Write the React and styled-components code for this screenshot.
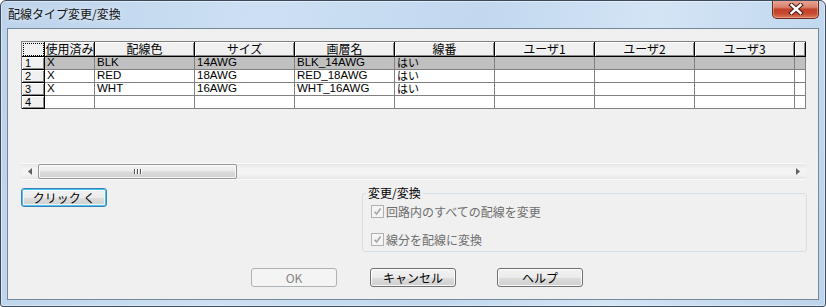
import React from "react";
import styled, { createGlobalStyle } from "styled-components";

const GlobalStyle = createGlobalStyle`
  html, body {
    margin: 0;
    padding: 0;
    background: #ffffff;
  }
  body {
    font-family: "Noto Sans CJK JP", "Liberation Sans", sans-serif;
    font-size: 12px;
    color: #000;
  }
`;

const Window = styled.div`
  width: 826px;
  height: 307px;
  box-sizing: border-box;
  border: 1px solid #3b4a5b;
  border-radius: 6px 6px 3px 3px;
  background: linear-gradient(
    100deg,
    #bcd3eb 0%,
    #cde0f3 30%,
    #c2d8ef 55%,
    #d3e4f5 75%,
    #bdd4ec 100%
  );
  box-shadow: inset 0 0 0 1px rgba(255, 255, 255, 0.45);
  display: flex;
  flex-direction: column;
  padding: 0 6px 6px 6px;
  overflow: hidden;
`;

const TitleBar = styled.div`
  height: 27px;
  display: flex;
  justify-content: space-between;
  align-items: flex-start;
`;

const Title = styled.div`
  padding: 5px 0 0 1px;
  font-size: 12px;
  line-height: 16px;
  color: #111;
  text-shadow: 0 0 6px rgba(255, 255, 255, 0.9);
`;

const CloseButton = styled.div`
  width: 47px;
  height: 19px;
  box-sizing: border-box;
  margin-top: -1px;
  border: 1px solid #6b2a20;
  border-top: none;
  border-radius: 0 0 5px 5px;
  background: linear-gradient(
    #e8a999 0%,
    #d9826d 40%,
    #c24129 52%,
    #c8492f 75%,
    #d87a5c 100%
  );
  box-shadow: inset 0 0 0 1px rgba(255, 200, 180, 0.45);
  display: flex;
  align-items: center;
  justify-content: center;
`;

const Client = styled.div`
  flex: 1;
  border: 1px solid #75879b;
  background: #f0f0f0;
  padding: 12px 11px 0 13px;
  display: flex;
  flex-direction: column;
`;

const GridArea = styled.div`
  width: 785px;
  height: 139px;
  display: flex;
  flex-direction: column;
  justify-content: space-between;
`;

const Grid = styled.div`
  display: grid;
  grid-template-columns: 23px 50px repeat(7, 100px) 11px;
  grid-template-rows: 15px repeat(4, 13px);
  border-left: 1px solid #808080;
  border-top: 1px solid #808080;
  font-family: "Liberation Sans", "Noto Sans CJK JP", sans-serif;
  font-size: 12px;
  line-height: 12px;
`;

const HeadCell = styled.div`
  box-sizing: border-box;
  background: #f0f0f0;
  border-right: 1px solid #000;
  border-bottom: 1px solid #000;
  box-shadow: inset 1px 1px 0 #ffffff, inset -1px -1px 0 #8a8a8a;
  text-align: ${(p) => (p.$left ? "left" : "center")};
  padding-left: ${(p) => (p.$left ? "3px" : "0")};
  font-family: ${(p) =>
    p.$row ? '"Liberation Sans", sans-serif' : '"Noto Sans CJK JP", sans-serif'};
  font-size: ${(p) => (p.$row ? "11px" : "12px")};
  line-height: ${(p) => (p.$row ? "12px" : "14px")};
  white-space: nowrap;
`;

const CornerCell = styled.div`
  box-sizing: border-box;
  background: #f0f0f0;
  border-right: 1px solid #000;
  border-bottom: 1px solid #000;
  outline: 1px dotted #000;
  outline-offset: -2px;
`;

const DataCell = styled.div`
  box-sizing: border-box;
  background: ${(p) => (p.$selected ? "#c0c0c0" : "#ffffff")};
  border-right: 1px solid #808080;
  border-bottom: 1px solid #808080;
  padding-left: 2px;
  white-space: nowrap;
  font-size: ${(p) => (p.$cjk ? "11px" : "11.5px")};
  line-height: 11px;
  font-family: ${(p) =>
    p.$cjk ? '"Noto Sans CJK JP", sans-serif' : '"Liberation Sans", sans-serif'};
`;

const ScrollBar = styled.div`
  height: 17px;
  box-sizing: border-box;
  display: flex;
  align-items: stretch;
  background: linear-gradient(#e6e6e6, #f3f3f3 30%, #f3f3f3 70%, #e6e6e6);
  border-top: 1px solid #fafafa;
  border-bottom: 1px solid #fafafa;
`;

const ScrollArrow = styled.div`
  width: 17px;
  display: flex;
  align-items: center;
  justify-content: center;
`;

const Thumb = styled.div`
  width: 199px;
  box-sizing: border-box;
  border: 1px solid #959595;
  border-radius: 2px;
  background: linear-gradient(#f4f4f4, #eaeaea 45%, #dadada 55%, #d2d2d2);
  box-shadow: inset 0 0 0 1px rgba(255, 255, 255, 0.8);
  display: flex;
  align-items: center;
  justify-content: center;
  gap: 2px;
`;

const Grip = styled.span`
  width: 1px;
  height: 5px;
  background: #555;
  box-shadow: 1px 0 0 #fff;
`;

const Track = styled.div`
  flex: 1;
`;

const MiddleRow = styled.div`
  display: flex;
  align-items: flex-start;
  padding-top: 5px;
  width: 786px;
`;

const Button = styled.div`
  width: 86px;
  height: 19px;
  box-sizing: border-box;
  margin-left: ${(p) => p.$ml || 0}px;
  margin-top: ${(p) => p.$mt || 0}px;
  border: 1px solid ${(p) => (p.$disabled ? "#adb2b5" : p.$focus ? "#3c7fb1" : "#707070")};
  border-radius: 3px;
  background: ${(p) =>
    p.$disabled
      ? "#f4f4f4"
      : "linear-gradient(#f2f2f2 0%, #ebebeb 50%, #dddddd 51%, #cfcfcf 100%)"};
  box-shadow: ${(p) =>
    p.$disabled
      ? "none"
      : p.$focus
      ? "inset 0 0 0 1px #47c6f5, inset 0 0 0 2px rgba(255,255,255,0.7)"
      : "inset 0 0 0 1px rgba(255,255,255,0.85)"};
  color: ${(p) => (p.$disabled ? "#838383" : "#000")};
  font-size: 12px;
  line-height: 17px;
  text-align: center;
  white-space: nowrap;
`;

const GroupBox = styled.fieldset`
  margin: 0 0 0 auto;
  width: 445px;
  height: 67px;
  box-sizing: border-box;
  border: 1px solid #d5dfe5;
  border-radius: 3px;
  padding: 0 8px;
  display: flex;
  flex-direction: column;
  gap: 15px;
`;

const Legend = styled.legend`
  margin-left: -5px;
  padding: 0 2px;
  font-size: 12px;
  line-height: 16px;
  color: #000;
`;

const CheckRow = styled.div`
  display: flex;
  align-items: center;
  gap: 2px;
  height: 13px;
  margin-top: ${(p) => p.$mt || 0}px;
  color: #6d6d6d;
  font-size: 12px;
  line-height: 13px;
  white-space: nowrap;
`;

const CheckBox = styled.span`
  width: 13px;
  height: 13px;
  box-sizing: border-box;
  border: 1px solid #b1b1b1;
  background: #f4f4f4;
  display: flex;
  align-items: center;
  justify-content: center;
`;

const ButtonRow = styled.div`
  display: flex;
  margin-top: 16px;
`;

const columns = ["使用済み", "配線色", "サイズ", "画層名", "線番", "ユーザ1", "ユーザ2", "ユーザ3", ""];

const rows = [
  ["X", "BLK", "14AWG", "BLK_14AWG", "はい"],
  ["X", "RED", "18AWG", "RED_18AWG", "はい"],
  ["X", "WHT", "16AWG", "WHT_16AWG", "はい"],
  ["", "", "", "", ""],
];

const Check = () => (
  <CheckBox>
    <svg width="9" height="9" viewBox="0 0 9 9">
      <path d="M1.5 4.8 L3.6 7 L7.6 1.5" fill="none" stroke="#a6a6a6" strokeWidth="1.6" />
    </svg>
  </CheckBox>
);

export default function App() {
  return (
    <>
      <GlobalStyle />
      <Window>
        <TitleBar>
          <Title>配線タイプ変更/変換</Title>
          <CloseButton>
            <svg width="16" height="12" viewBox="0 0 16 12">
              <path d="M3.5 2 L12.5 10 M12.5 2 L3.5 10" stroke="#4a1a12" strokeWidth="4.4" strokeLinecap="square" />
              <path d="M3.5 2 L12.5 10 M12.5 2 L3.5 10" stroke="#ffffff" strokeWidth="2.4" strokeLinecap="square" />
            </svg>
          </CloseButton>
        </TitleBar>
        <Client>
          <GridArea>
            <Grid>
              <CornerCell />
              {columns.map((c, i) => (
                <HeadCell key={i}>{c}</HeadCell>
              ))}
              {rows.map((r, ri) => (
                <React.Fragment key={ri}>
                  <HeadCell $left $row>
                    {ri + 1}
                  </HeadCell>
                  {[...r, "", "", "", ""].map((v, ci) => (
                    <DataCell key={ci} $selected={ri === 0} $cjk={ci === 4}>
                      {v}
                    </DataCell>
                  ))}
                </React.Fragment>
              ))}
            </Grid>
            <ScrollBar>
              <ScrollArrow>
                <svg width="4" height="7" viewBox="0 0 4 7">
                  <path d="M4 0 L0 3.5 L4 7 Z" fill="#606060" />
                </svg>
              </ScrollArrow>
              <Thumb>
                <Grip />
                <Grip />
                <Grip />
              </Thumb>
              <Track />
              <ScrollArrow>
                <svg width="4" height="7" viewBox="0 0 4 7">
                  <path d="M0 0 L4 3.5 L0 7 Z" fill="#606060" />
                </svg>
              </ScrollArrow>
            </ScrollBar>
          </GridArea>
          <MiddleRow>
            <Button $focus $mt={3}>
              クリック く
            </Button>
            <GroupBox>
              <Legend>変更/変換</Legend>
              <CheckRow $mt={4}>
                <Check />
                回路内のすべての配線を変更
              </CheckRow>
              <CheckRow>
                <Check />
                線分を配線に変換
              </CheckRow>
            </GroupBox>
          </MiddleRow>
          <ButtonRow>
            <Button $disabled $ml={230}>
              OK
            </Button>
            <Button $ml={33}>キャンセル</Button>
            <Button $ml={41}>ヘルプ</Button>
          </ButtonRow>
        </Client>
      </Window>
    </>
  );
}
